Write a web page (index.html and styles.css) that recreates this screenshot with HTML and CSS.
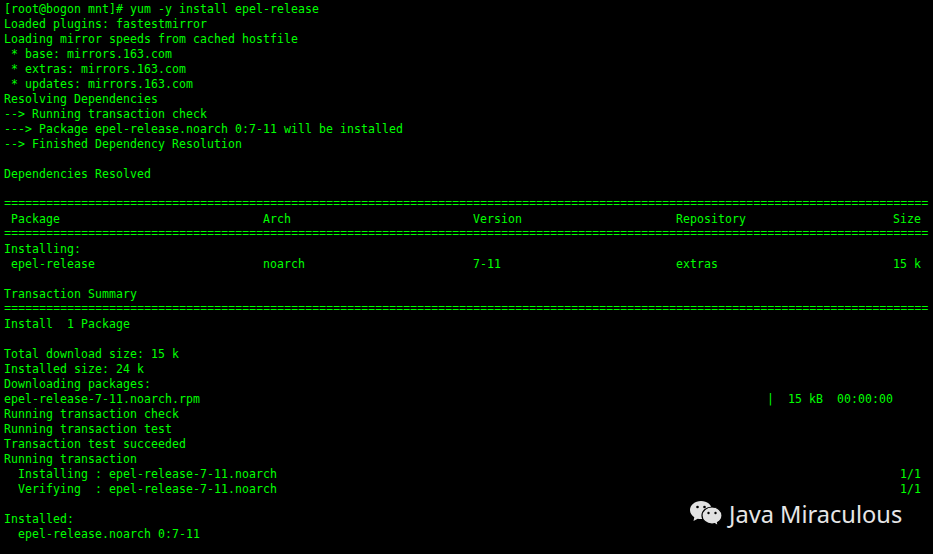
FILE: index.html
```html
<!DOCTYPE html>
<html lang="en">
<head>
<meta charset="utf-8">
<title>yum install epel-release</title>
<link rel="stylesheet" href="styles.css">
</head>
<body>
<main class="terminal">
<pre class="output">[root@bogon mnt]# yum -y install epel-release
Loaded plugins: fastestmirror
Loading mirror speeds from cached hostfile
 * base: mirrors.163.com
 * extras: mirrors.163.com
 * updates: mirrors.163.com
Resolving Dependencies
--&gt; Running transaction check
---&gt; Package epel-release.noarch 0:7-11 will be installed
--&gt; Finished Dependency Resolution

Dependencies Resolved

<span class="rule">====================================================================================================================================</span>
 Package                             Arch                          Version                      Repository                     Size
<span class="rule">====================================================================================================================================</span>
Installing:
 epel-release                        noarch                        7-11                         extras                         15 k

Transaction Summary
<span class="rule">====================================================================================================================================</span>
Install  1 Package

Total download size: 15 k
Installed size: 24 k
Downloading packages:
epel-release-7-11.noarch.rpm                                                                                 |  15 kB  00:00:00
Running transaction check
Running transaction test
Transaction test succeeded
Running transaction
  Installing : epel-release-7-11.noarch                                                                                         1/1
  Verifying  : epel-release-7-11.noarch                                                                                         1/1

Installed:
  epel-release.noarch 0:7-11</pre>
<div class="watermark">
<svg class="wechat" viewBox="0 0 34 28" width="34" height="28" aria-hidden="true">
<path class="bubble" d="M12 1C5.900 1 1 5 1 10c0 3 1.700 5.500 4.300 7.200L4.500 21l4.200-2.300c1.100.3 2.200.4 3.300.4 6.100 0 11-4 11-9.100S18.100 1 12 1z"/>
<circle class="eye" cx="8.500" cy="7" r="1.300"/>
<circle class="eye" cx="15.500" cy="7" r="1.300"/>
<path class="bubble front" d="M23 7c-5.500 0-10 3.700-10 8.500S17.500 24 23 24c.9 0 1.800-.1 2.700-.3l3.600 2.300-.8-3.400c2.700-1.600 4.500-4.100 4.500-7.100C33 10.700 28.500 7 23 7z"/>
<circle class="eye" cx="19.500" cy="13" r="1.200"/>
<circle class="eye" cx="26.500" cy="13" r="1.200"/>
</svg>
<span class="brand">Java Miraculous</span>
</div>
</main>
</body>
</html>
```
FILE: styles.css
```css
html, body {
  margin: 0;
  padding: 0;
  background: #000;
}
.terminal {
  position: relative;
  width: 933px;
  height: 554px;
  overflow: hidden;
  background: #000;
}
.output {
  margin: 0;
  padding: 2px 0 0 4px;
  font-family: "DejaVu Sans Mono", monospace;
  font-size: 11.5px;
  letter-spacing: 0.077px;
  line-height: 15px;
  color: #00ff00;
  white-space: pre;
}
.rule {
  display: inline-block;
  height: 15px;
  vertical-align: top;
  font-family: "Liberation Mono", monospace;
  font-size: 12px;
  letter-spacing: -0.2px;
  line-height: 15px;
}
.watermark {
  position: absolute;
  left: 689px;
  top: 499px;
  display: flex;
  align-items: center;
  gap: 6px;
}
.wechat {
  display: block;
}
.bubble {
  fill: #e2e2e2;
}
.front {
  stroke: #000;
  stroke-width: 1.2;
}
.eye {
  fill: #000;
}
.brand {
  font-family: "Noto Sans", sans-serif;
  font-size: 23.6px;
  line-height: 30px;
  color: #e6e6e6;
}
```
